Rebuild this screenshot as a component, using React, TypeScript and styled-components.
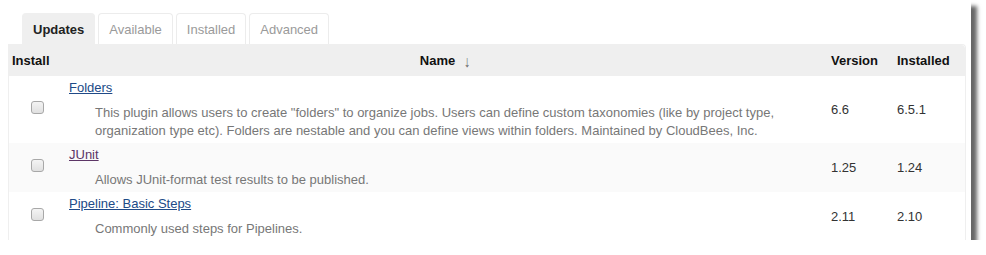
import React from 'react'
import styled, { createGlobalStyle } from 'styled-components'

const GlobalStyle = createGlobalStyle`
  html, body {
    margin: 0;
    padding: 0;
    background: #fff;
  }
  body {
    font-family: "Liberation Sans", Arial, sans-serif;
    font-size: 13px;
    color: #333;
  }
`

const plugins = [
    {
        id: 'folders',
        name: 'Folders',
        visited: false,
        description: [
            'This plugin allows users to create "folders" to organize jobs. Users can define custom taxonomies (like by project type,',
            'organization type etc). Folders are nestable and you can define views within folders. Maintained by CloudBees, Inc.',
        ],
        version: '6.6',
        installed: '6.5.1',
    },
    {
        id: 'junit',
        name: 'JUnit',
        visited: true,
        description: ['Allows JUnit-format test results to be published.'],
        version: '1.25',
        installed: '1.24',
    },
    {
        id: 'pipeline',
        name: 'Pipeline: Basic Steps',
        visited: false,
        description: ['Commonly used steps for Pipelines.'],
        version: '2.11',
        installed: '2.10',
    },
]

const tabs = ['Updates', 'Available', 'Installed', 'Advanced']

const App = () => {
    return (
        <>
            <GlobalStyle />
            <Frame>
                <TabBar>
                    {tabs.map((t, i) => (
                        <Tab key={t} $active={i === 0}>{t}</Tab>
                    ))}
                </TabBar>

                <PluginTable>
                    <colgroup>
                        <col style={{ width: 57 }} />
                        <col />
                        <col style={{ width: 66 }} />
                        <col style={{ width: 74 }} />
                    </colgroup>
                    <thead>
                        <tr>
                            <HeadCell>Install</HeadCell>
                            <HeadCell $center>
                                Name<SortArrow>↓</SortArrow>
                            </HeadCell>
                            <HeadCell $num>Version</HeadCell>
                            <HeadCell $num>Installed</HeadCell>
                        </tr>
                    </thead>
                    <tbody>
                        {plugins.map((p, i) => (
                            <Row key={p.id} $odd={i % 2 === 1}>
                                <CheckCell>
                                    <Check type="checkbox" />
                                </CheckCell>
                                <NameCell>
                                    <PluginLink href="#" $visited={p.visited}>{p.name}</PluginLink>
                                    <Description>
                                        {p.description.map(line => (
                                            <div key={line}>{line}</div>
                                        ))}
                                    </Description>
                                </NameCell>
                                <NumCell>{p.version}</NumCell>
                                <NumCell>{p.installed}</NumCell>
                            </Row>
                        ))}
                    </tbody>
                </PluginTable>
            </Frame>
        </>
    )
}

const Frame = styled.div`
  width: 963px;
  height: 227px;
  padding: 13px 0 0 8px;
  background: #fff;
  overflow: hidden;
  box-shadow: 6px 6px 4px rgba(0, 0, 0, 0.6);
`

const TabBar = styled.div`
  display: flex;
  gap: 3px;
  margin-left: 14px;
`

const Tab = styled.div<{ $active?: boolean }>`
  height: 30px;
  line-height: 31px;
  padding: 0 10px;
  border: 1px solid ${p => (p.$active ? '#efefef' : '#ececec')};
  border-bottom: none;
  border-radius: 4px 4px 0 0;
  background: ${p => (p.$active ? '#efefef' : '#fff')};
  color: ${p => (p.$active ? '#222' : '#9a9a9a')};
  font-weight: ${p => (p.$active ? 'bold' : 'normal')};
`

const PluginTable = styled.table`
  width: 958px;
  border-collapse: separate;
  border-spacing: 0;
  border: 1px solid #efefef;
  border-bottom: none;
  border-radius: 0 4px 0 0;
  table-layout: fixed;
`

const HeadCell = styled.th<{ $center?: boolean; $num?: boolean }>`
  height: 31px;
  padding: 0 ${p => (p.$num ? '6px' : '3px')};
  background: #efefef;
  color: #111;
  font-weight: bold;
  font-size: 13px;
  text-align: ${p => (p.$center ? 'center' : 'left')};
  vertical-align: middle;

  &:last-child {
    border-radius: 0 4px 0 0;
  }
`

const SortArrow = styled.span`
  display: inline-block;
  margin-left: 8px;
  font-size: 16px;
  line-height: 13px;
  font-weight: normal;
  color: #6b6b6b;
  vertical-align: -2px;
  transform: scaleX(0.8);
`

const Row = styled.tr<{ $odd?: boolean }>`
  background: ${p => (p.$odd ? '#fafafa' : '#fff')};
`

const CheckCell = styled.td`
  text-align: center;
  vertical-align: middle;
  padding: 0;
`

const Check = styled.input`
  display: block;
  appearance: none;
  width: 13px;
  height: 13px;
  margin: 0 auto 4px;
  border: 1px solid #a8a8a8;
  border-radius: 3px;
  background: linear-gradient(#f4f4f4, #e0e0e0);
`

const NameCell = styled.td`
  padding: 3px 3px 3px;
  vertical-align: top;
`

const PluginLink = styled.a<{ $visited?: boolean }>`
  display: inline-block;
  line-height: 18px;
  color: ${p => (p.$visited ? '#5c3566' : '#204a87')};
  text-decoration: underline;
`

const Description = styled.div`
  margin: 7px 0 0 26px;
  line-height: 18px;
  color: #777;
`

const NumCell = styled.td`
  padding: 0 6px;
  vertical-align: middle;
  color: #333;
`

export default App
